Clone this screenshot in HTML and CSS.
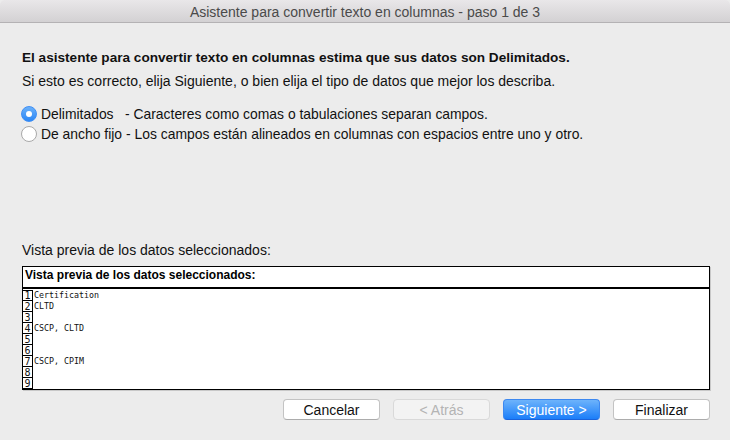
FILE: index.html
```html
<!DOCTYPE html>
<html lang="es">
<head>
<meta charset="utf-8">
<link rel="stylesheet" href="styles.css">
</head>
<body>
<div class="window">
  <div class="titlebar">Asistente para convertir texto en columnas - paso 1 de 3</div>
  <div class="content">
    <p class="heading">El asistente para convertir texto en columnas estima que sus datos son Delimitados.</p>
    <p class="sub">Si esto es correcto, elija Siguiente, o bien elija el tipo de datos que mejor los describa.</p>
    <div class="options">
      <div class="option">
        <span class="radio checked"></span>
        <span class="opt-label">Delimitados</span>
        <span class="opt-desc">- Caracteres como comas o tabulaciones separan campos.</span>
      </div>
      <div class="option">
        <span class="radio"></span>
        <span class="opt-label">De ancho fijo</span>
        <span class="opt-desc">- Los campos están alineados en columnas con espacios entre uno y otro.</span>
      </div>
    </div>
    <div class="spacer"></div>
    <p class="preview-label">Vista previa de los datos seleccionados:</p>
    <div class="preview">
      <div class="preview-head">Vista previa de los datos seleccionados:</div>
      <div class="rows">
        <div class="row"><span class="num">1</span><span class="cell">Certification</span></div>
        <div class="row"><span class="num">2</span><span class="cell">CLTD</span></div>
        <div class="row"><span class="num">3</span><span class="cell"></span></div>
        <div class="row"><span class="num">4</span><span class="cell">CSCP, CLTD</span></div>
        <div class="row"><span class="num">5</span><span class="cell"></span></div>
        <div class="row"><span class="num">6</span><span class="cell"></span></div>
        <div class="row"><span class="num">7</span><span class="cell">CSCP, CPIM</span></div>
        <div class="row"><span class="num">8</span><span class="cell"></span></div>
        <div class="row"><span class="num">9</span><span class="cell"></span></div>
      </div>
    </div>
    <div class="buttons">
      <button class="btn">Cancelar</button>
      <button class="btn disabled">&lt; Atrás</button>
      <button class="btn primary">Siguiente &gt;</button>
      <button class="btn">Finalizar</button>
    </div>
  </div>
</div>
</body>
</html>
```
FILE: styles.css
```css
html, body {
  margin: 0;
  padding: 0;
}
body {
  width: 730px;
  height: 440px;
  background: #ececec;
  font-family: "Liberation Sans", Arial, sans-serif;
  font-size: 14px;
  color: #111;
  overflow: hidden;
}
.window {
  display: flex;
  flex-direction: column;
  height: 440px;
}
.titlebar {
  height: 22px;
  line-height: 25px;
  text-align: center;
  color: #4a4a4a;
  font-size: 14px;
  background: linear-gradient(#e9e7e9, #d3d1d3);
  border-bottom: 1px solid #b4b2b4;
  border-radius: 5px 5px 0 0;
}
.content {
  flex: 1;
  display: flex;
  flex-direction: column;
  padding: 0 20px 0 22px;
}
p { margin: 0; }
.heading {
  margin-top: 27px;
  font-weight: bold;
  font-size: 13.6px;
  line-height: 16px;
}
.sub {
  margin-top: 7px;
  line-height: 16px;
}
.options {
  margin-top: 17px;
  display: flex;
  flex-direction: column;
  gap: 4px;
  font-size: 13.9px;
}
.option {
  display: flex;
  align-items: center;
  height: 16px;
  margin-left: -1px;
}
.radio {
  width: 14px;
  height: 14px;
  border-radius: 50%;
  border: 1px solid #a9a9a9;
  background: #fff;
  margin-right: 4px;
  box-sizing: content-box;
  display: flex;
  align-items: center;
  justify-content: center;
}
.radio.checked {
  border-color: #3f8ff5;
  background: linear-gradient(#6bb1fa, #2b87f6);
}
.radio.checked::after {
  content: "";
  width: 6px;
  height: 6px;
  border-radius: 50%;
  background: #fff;
}
.opt-label {
  width: 84px;
}
.option:nth-child(2) .opt-label {
  width: auto;
  margin-right: 4px;
}
.spacer { flex: 1; }
.preview-label {
  line-height: 16px;
  margin-bottom: 8px;
}
.preview {
  background: #fff;
  border: 1px solid #000;
  box-shadow: 1px 1px 0 #c8c8c8;
  height: 124px;
  box-sizing: border-box;
  display: flex;
  flex-direction: column;
}
.preview-head {
  height: 23px;
  border-bottom: 2px solid #000;
  box-sizing: border-box;
  font-weight: bold;
  font-size: 12px;
  line-height: 16px;
  padding-left: 2px;
  color: #000;
}
.rows {
  display: flex;
  flex-direction: column;
  padding-top: 1px;
}
.row {
  display: flex;
  height: 11px;
  font-family: "DejaVu Sans Mono", "Liberation Mono", monospace;
  font-size: 8.3px;
  line-height: 11px;
}
.num {
  border-right: 1px solid #000;
  border-bottom: 1px solid #000;
  box-sizing: border-box;
  text-align: center;
  font-size: 10px;
  line-height: 11px;
  height: 11px;
  width: 10px;
}
.row:first-child .num { border-top: 1px solid #000; line-height: 10px; }
.cell { padding-left: 1px; }
.buttons {
  display: flex;
  justify-content: flex-end;
  gap: 13px;
  margin-top: 9px;
  margin-bottom: 20px;
}
.btn {
  width: 97px;
  height: 21px;
  font-family: "Liberation Sans", Arial, sans-serif;
  font-size: 14px;
  color: #111;
  background: #fff;
  border: 1px solid #c3c3c3;
  border-bottom-color: #acacac;
  border-radius: 4px;
  padding: 0;
}
.btn.disabled {
  color: #b4b4b4;
  background: #f3f3f3;
  border-color: #d9d9d9;
}
.btn.primary {
  color: #fff;
  background: linear-gradient(#6db3fb, #1b7ef9);
  border-color: #3c88f0;
  border-bottom-color: #1a63dc;
}
```
